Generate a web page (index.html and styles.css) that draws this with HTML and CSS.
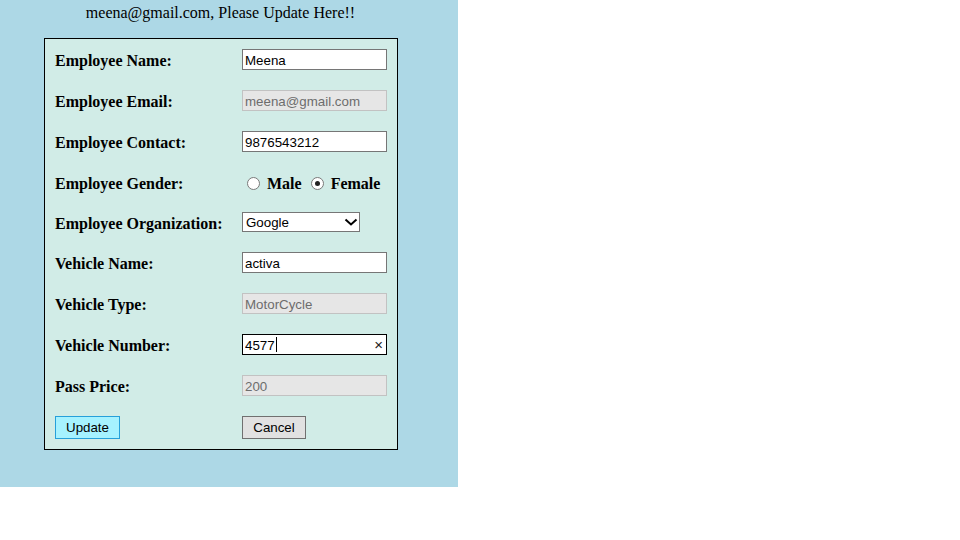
FILE: index.html
```html
<!DOCTYPE html>
<html>
<head>
<meta charset="utf-8">
<title>Update</title>
<link rel="stylesheet" href="styles.css">
</head>
<body>
<div class="panel">
  <div class="heading">meena@gmail.com, Please Update Here!!</div>
  <table class="form">
    <colgroup><col class="c1"><col class="c2"></colgroup>
    <tr><td class="label">Employee Name:</td><td><input class="field" type="text" value="Meena"></td></tr>
    <tr><td class="label">Employee Email:</td><td><input class="field ro" type="text" value="meena@gmail.com" readonly></td></tr>
    <tr><td class="label">Employee Contact:</td><td><input class="field" type="text" value="9876543212"></td></tr>
    <tr class="short"><td class="label">Employee Gender:</td><td class="gender"><span class="radio"></span> Male <span class="radio checked"></span> Female</td></tr>
    <tr class="short"><td class="label">Employee Organization:</td><td><span class="selwrap"><select class="sel"><option>Google</option></select><svg class="chev" width="14" height="8" viewBox="0 0 14 8"><path d="M1.5 1.5 L7 6.5 L12.5 1.5" fill="none" stroke="#000" stroke-width="2"/></svg></span></td></tr>
    <tr><td class="label">Vehicle Name:</td><td><input class="field" type="text" value="activa"></td></tr>
    <tr><td class="label">Vehicle Type:</td><td><input class="field ro" type="text" value="MotorCycle" readonly></td></tr>
    <tr><td class="label">Vehicle Number:</td><td><span class="numwrap"><input class="field focus" type="text" value="4577"><span class="caret"></span><span class="clear">×</span></span></td></tr>
    <tr><td class="label">Pass Price:</td><td><input class="field ro" type="text" value="200" readonly></td></tr>
    <tr><td><button class="btn update">Update</button></td><td><button class="btn cancel">Cancel</button></td></tr>
  </table>
</div>
</body>
</html>
```
FILE: styles.css
```css
html, body {
  margin: 0;
  padding: 0;
  background: #fff;
}
body {
  font-family: "Liberation Serif", "Times New Roman", serif;
  font-size: 16px;
  color: #000;
}
.panel {
  width: 458px;
  height: 487px;
  background: #add8e6;
  padding-top: 4px;
  box-sizing: border-box;
}
.heading {
  width: 441px;
  text-align: center;
  line-height: 18px;
  height: 18px;
}
.form {
  margin: 16px 0 0 44px;
  width: 354px;
  table-layout: fixed;
  border: 1px solid #000;
  border-collapse: separate;
  border-spacing: 0;
  background: #d1ece7;
}
.c1 { width: 187px; }
.c2 { width: 165px; }
.form td {
  padding: 10px;
  vertical-align: middle;
}
.form td.label {
  font-weight: bold;
  line-height: 19px;
  white-space: nowrap;
  overflow: visible;
  padding-top: 11px;
  padding-bottom: 9px;
}
.form tr.short td {
  height: 20px;
}
.field {
  display: block;
  width: 145px;
  height: 21px;
  box-sizing: border-box;
  margin: 0;
  border: 1px solid #767676;
  padding: 2px 2px 0;
  font-family: "Liberation Sans", Arial, sans-serif;
  font-size: 13.33px;
  color: #000;
  background: #fff;
  outline: none;
}
.field.ro {
  background: #e6e6e6;
  border-color: #c2c2c2;
  color: #6d6d6d;
}
.field.focus {
  border-color: #000;
}
.gender {
  font-weight: bold;
  line-height: 20px;
  white-space: nowrap;
  padding-top: 12px !important;
  padding-bottom: 8px !important;
}
.radio {
  display: inline-block;
  width: 13px;
  height: 13px;
  box-sizing: border-box;
  border: 1px solid #7a7a7a;
  border-radius: 50%;
  background: #fff;
  margin: 0 3px 0 5px;
  vertical-align: -1px;
  position: relative;
}
.radio.checked::after {
  content: "";
  position: absolute;
  left: 3px;
  top: 3px;
  width: 5px;
  height: 5px;
  border-radius: 50%;
  background: #222;
}
.selwrap {
  display: block;
  position: relative;
  width: 118px;
  height: 20px;
}
.sel {
  appearance: none;
  -webkit-appearance: none;
  display: block;
  width: 118px;
  height: 20px;
  box-sizing: border-box;
  margin: 0;
  border: 1px solid #767676;
  border-radius: 0;
  padding: 0 3px;
  background: #fff;
  font-family: "Liberation Sans", Arial, sans-serif;
  font-size: 13.33px;
  color: #000;
}
.chev {
  position: absolute;
  left: 102px;
  top: 6px;
  pointer-events: none;
}
.numwrap {
  display: block;
  position: relative;
  width: 145px;
  height: 21px;
}
.caret {
  position: absolute;
  left: 34px;
  top: 3px;
  width: 1px;
  height: 15px;
  background: #000;
}
.clear {
  position: absolute;
  right: 4px;
  top: 2px;
  font-family: "Liberation Sans", Arial, sans-serif;
  font-size: 15px;
  line-height: 18px;
  color: #222;
}
.btn {
  display: block;
  height: 23px;
  box-sizing: border-box;
  margin: 0;
  padding: 0 10px;
  font-family: "Liberation Sans", Arial, sans-serif;
  font-size: 13.33px;
  color: #000;
  border-radius: 0;
}
.update {
  width: 65px;
  background: #a6f2ff;
  border: 1px solid #26a0da;
}
.cancel {
  width: 64px;
  background: #e1e1e1;
  border: 1px solid #707070;
}
```
